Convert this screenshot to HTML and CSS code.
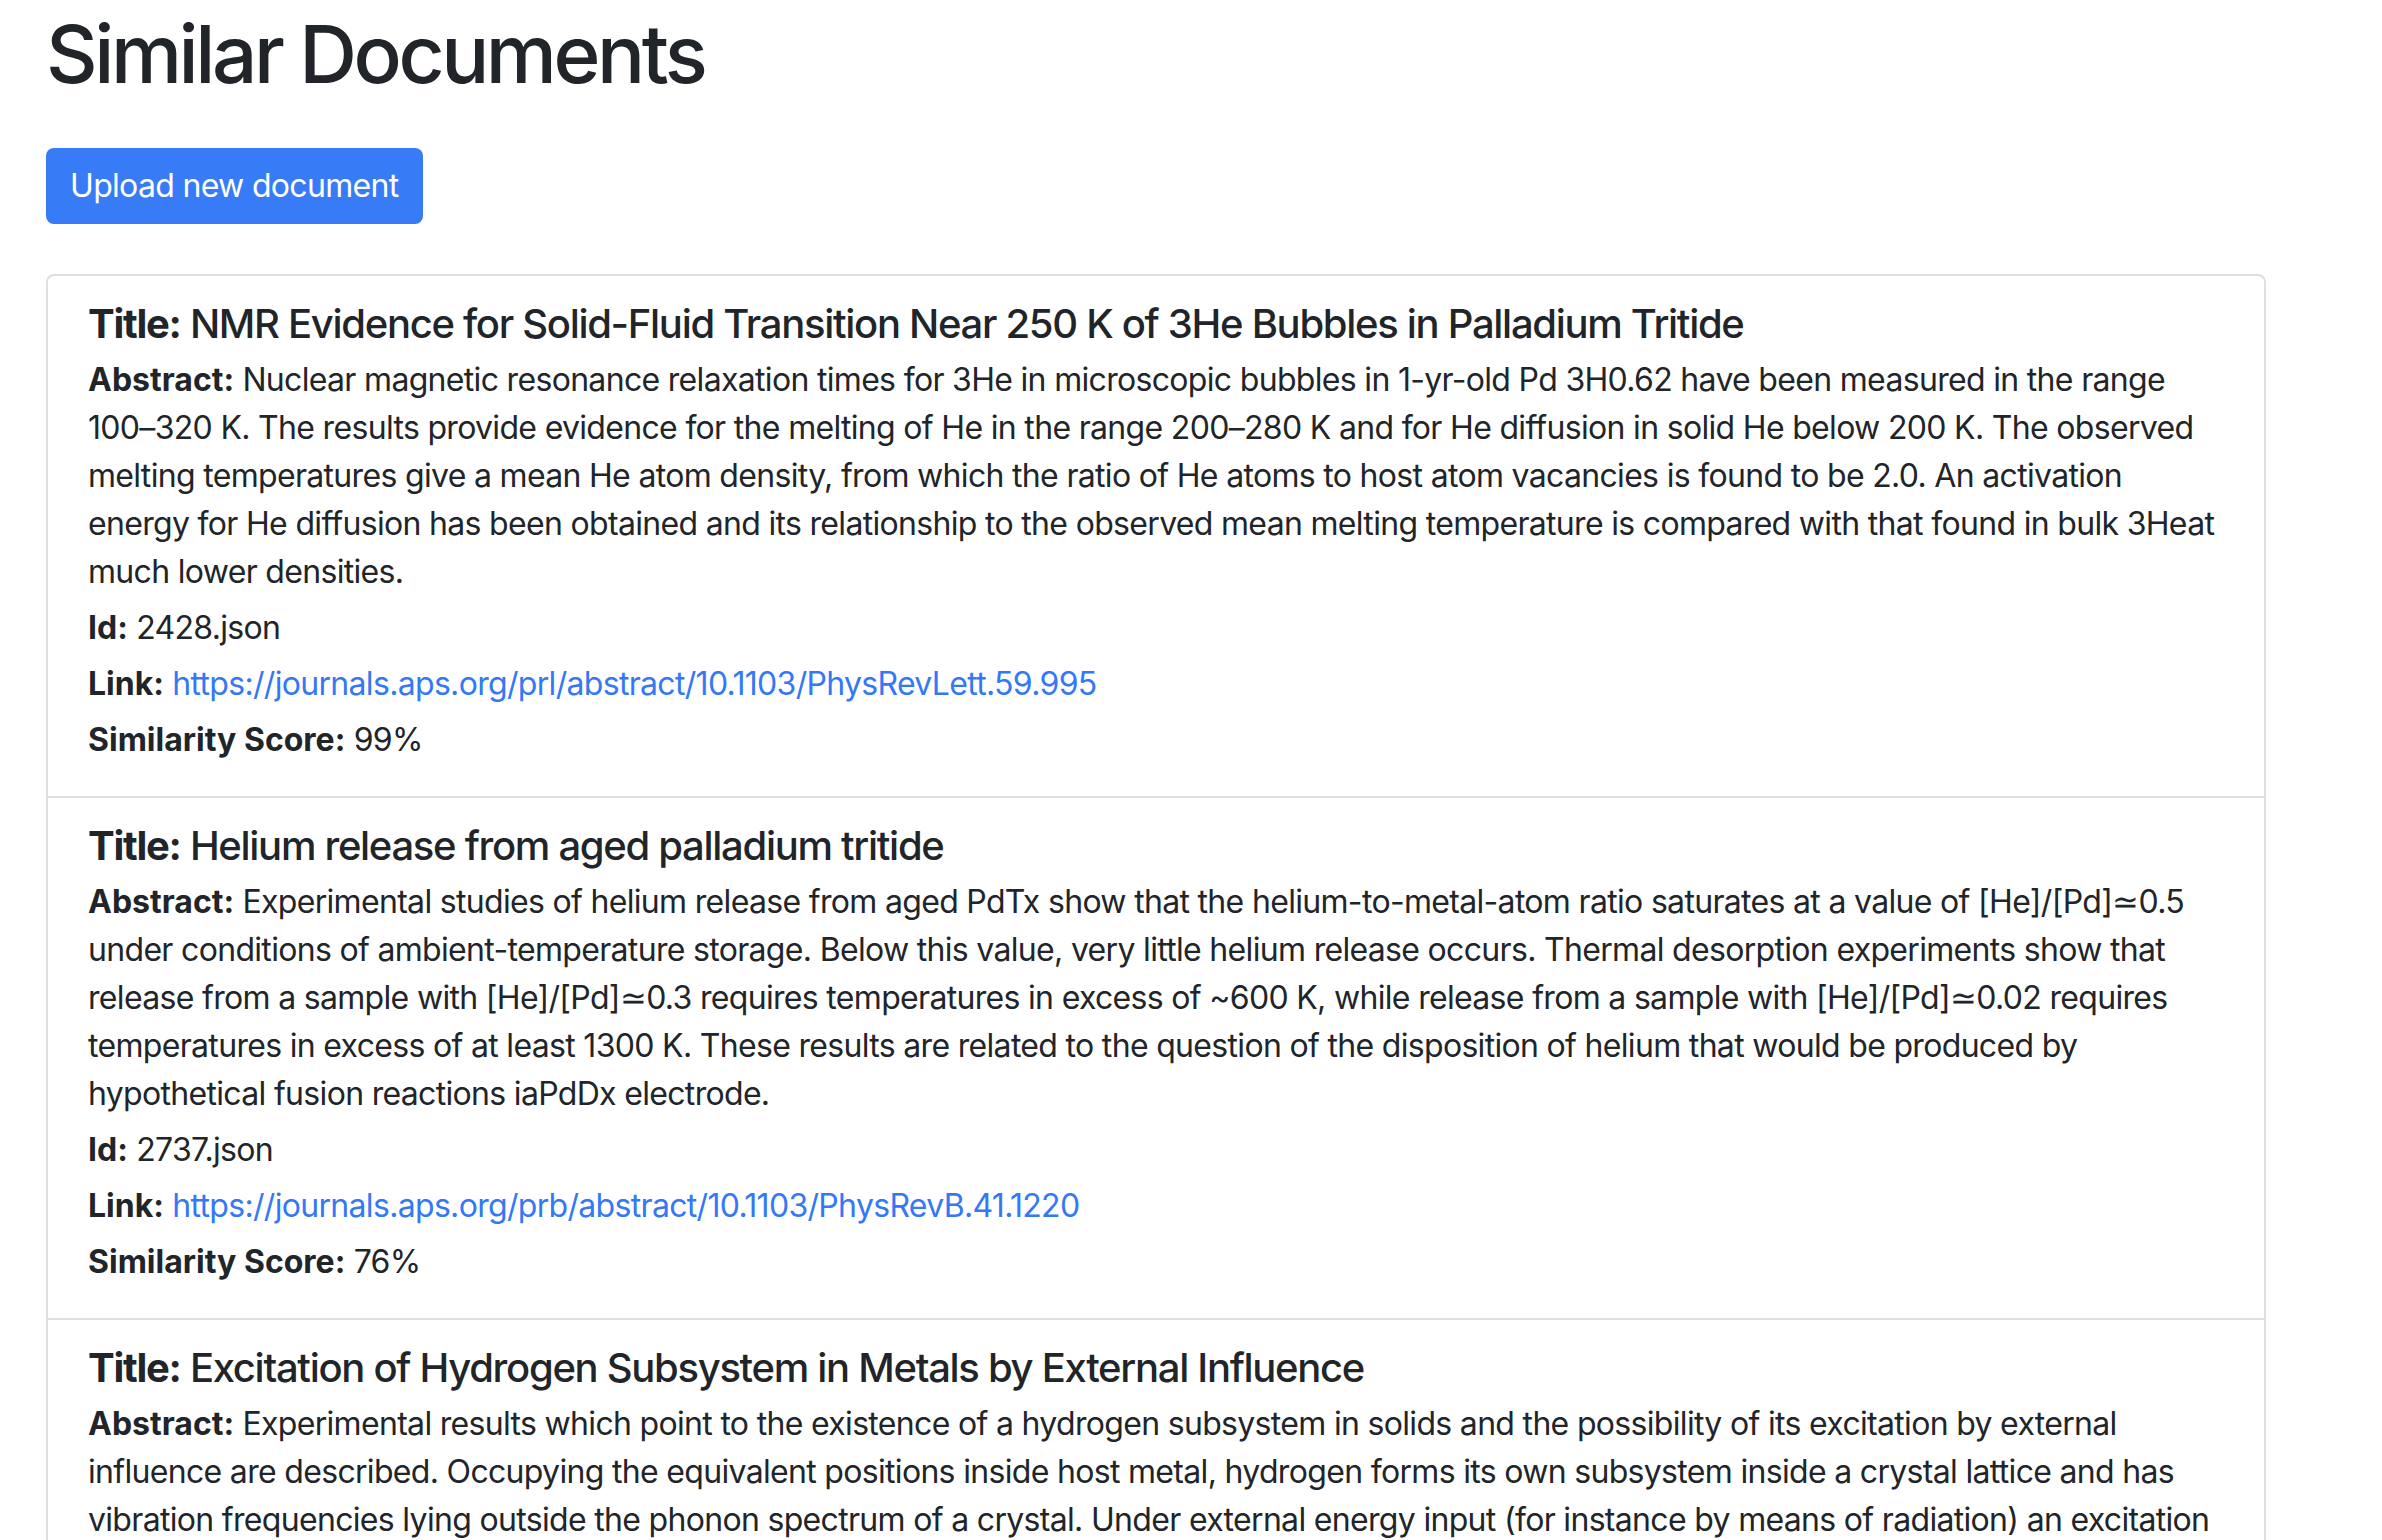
FILE: index.html
```html
<!DOCTYPE html>
<html lang="en">
<head>
<meta charset="utf-8">
<title>Similar Documents</title>
<link rel="stylesheet" href="styles.css">
</head>
<body>
<div class="page">
  <h1 class="page-title">Similar Documents</h1>
  <button class="btn-primary" type="button">Upload new document</button>
  <div class="results">
    <div class="result">
      <h5 class="result-title"><strong>Title:</strong> NMR Evidence for Solid-Fluid Transition Near 250 K of 3He Bubbles in Palladium Tritide</h5>
      <p class="field"><strong>Abstract:</strong> Nuclear magnetic resonance relaxation times for 3He in microscopic bubbles in 1-yr-old Pd 3H0.62 have been measured in the range 100–320 K. The results provide evidence for the melting of He in the range 200–280 K and for He diffusion in solid He below 200 K. The observed melting temperatures give a mean He atom density, from which the ratio of He atoms to host atom vacancies is found to be 2.0. An activation energy for He diffusion has been obtained and its relationship to the observed mean melting temperature is compared with that found in bulk 3Heat much lower densities.</p>
      <p class="field"><strong>Id:</strong> 2428.json</p>
      <p class="field"><strong>Link:</strong> <a href="#">https://journals.aps.org/prl/abstract/10.1103/PhysRevLett.59.995</a></p>
      <p class="field"><strong>Similarity Score:</strong> 99%</p>
    </div>
    <div class="result">
      <h5 class="result-title"><strong>Title:</strong> Helium release from aged palladium tritide</h5>
      <p class="field"><strong>Abstract:</strong> Experimental studies of helium release from aged PdTx show that the helium-to-metal-atom ratio saturates at a value of [He]/[Pd]≃0.5 under conditions of ambient-temperature storage. Below this value, very little helium release occurs. Thermal desorption experiments show that release from a sample with [He]/[Pd]≃0.3 requires temperatures in excess of ~600 K, while release from a sample with [He]/[Pd]≃0.02 requires temperatures in excess of at least 1300 K. These results are related to the question of the disposition of helium that would be produced by hypothetical fusion reactions iaPdDx electrode.</p>
      <p class="field"><strong>Id:</strong> 2737.json</p>
      <p class="field"><strong>Link:</strong> <a href="#">https://journals.aps.org/prb/abstract/10.1103/PhysRevB.41.1220</a></p>
      <p class="field"><strong>Similarity Score:</strong> 76%</p>
    </div>
    <div class="result">
      <h5 class="result-title"><strong>Title:</strong> Excitation of Hydrogen Subsystem in Metals by External Influence</h5>
      <p class="field"><strong>Abstract:</strong> Experimental results which point to the existence of a hydrogen subsystem in solids and the possibility of its excitation by external influence are described. Occupying the equivalent positions inside host metal, hydrogen forms its own subsystem inside a crystal lattice and has vibration frequencies lying outside the phonon spectrum of a crystal. Under external energy input (for instance by means of radiation) an excitation of the hydrogen subsystem occurs.</p>
    </div>
  </div>
</div>
</body>
</html>
```

FILE: styles.css
```css
html, body {
  margin: 0;
  padding: 0;
  background: #ffffff;
}

body {
  font-family: Inter, "Noto Sans", "Liberation Sans", sans-serif;
  font-size: 32px;
  line-height: 48px;
  letter-spacing: -0.68px;
  color: #212529;
}

.page {
  width: 2220px;
  padding: 0 46px;
}

.page-title {
  font-family: Inter, "Liberation Sans", sans-serif;
  font-size: 80px;
  line-height: 96px;
  font-weight: 500;
  letter-spacing: -3.45px;
  margin: 6px 0 0;
  color: #212529;
}

.btn-primary {
  display: inline-block;
  margin-top: 46px;
  height: 76px;
  padding: 0 24px;
  font-family: inherit;
  font-size: 32px;
  line-height: 48px;
  letter-spacing: -0.68px;
  color: #ffffff;
  background: #387bf6;
  border: 0;
  border-radius: 8px;
}

.results {
  margin-top: 50px;
  border: 2px solid #dfdfdf;
  border-radius: 8px;
}

.result {
  padding: 24px 40px;
  border-bottom: 2px solid #dfdfdf;
}

.result:last-child {
  border-bottom: 0;
}

.result-title {
  font-size: 40px;
  line-height: 48px;
  font-weight: 500;
  letter-spacing: -1.3px;
  margin: 0 0 8px;
}

.result-title strong {
  font-weight: 700;
}

.field strong {
  font-weight: 700;
  letter-spacing: 0;
}

.field {
  margin: 0 0 8px;
}

.field a {
  color: #3478f6;
  text-decoration: none;
}
```
